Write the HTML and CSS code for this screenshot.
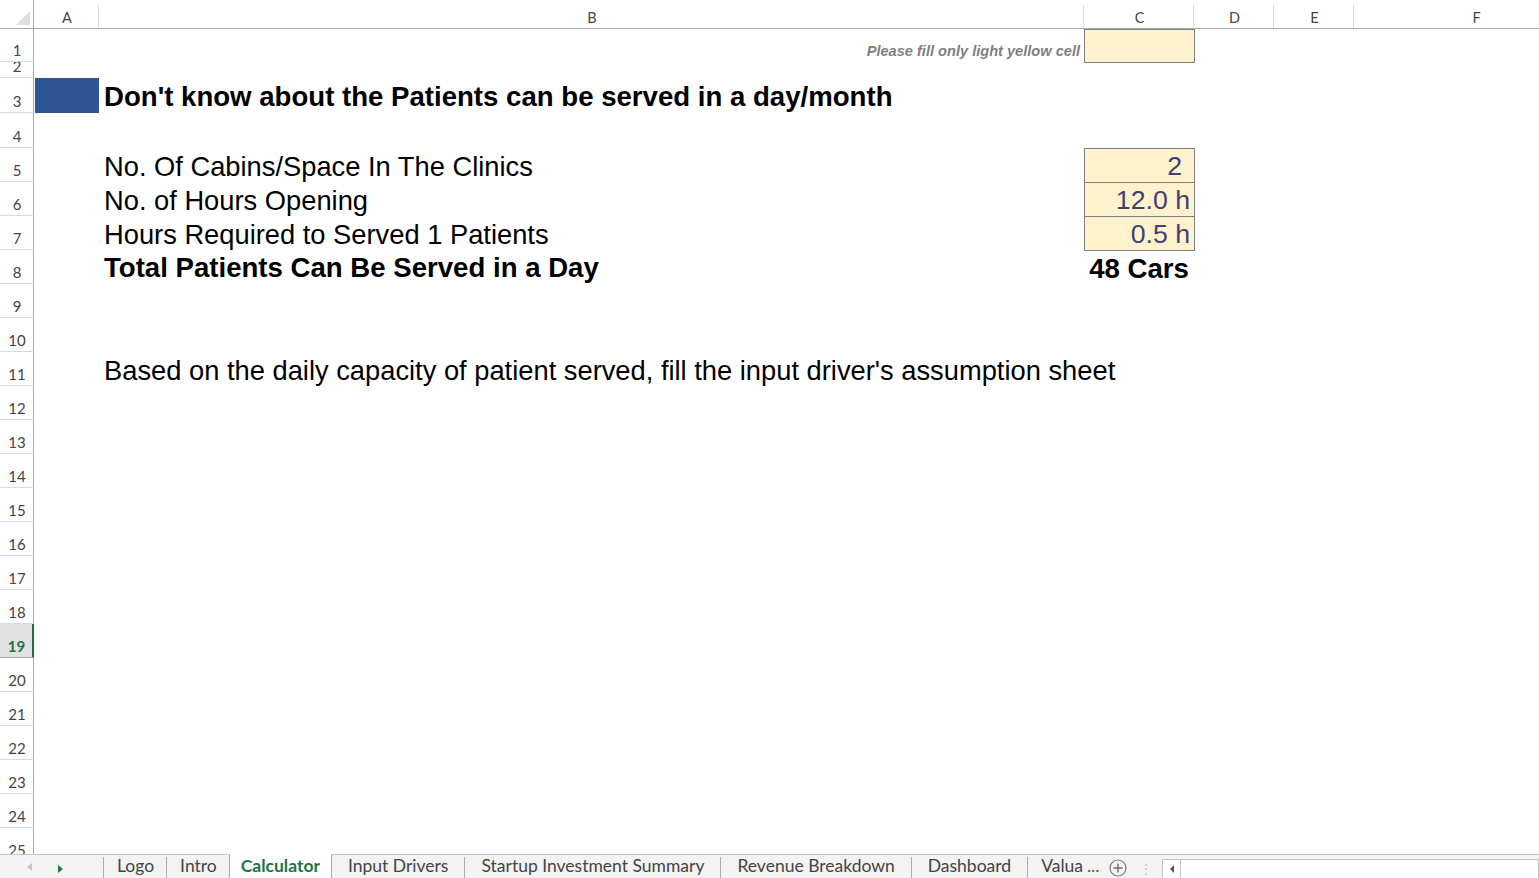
FILE: index.html
```html
<!DOCTYPE html>
<html lang="en">
<head>
  <meta charset="UTF-8" />
  <title>Calculator</title>
  <link rel="stylesheet" href="styles.css">
</head>
<body>

<!-- Sheet grid -->
<div class="sheet">
  <!-- column headers -->
  <div class="corner"><span class="corner-tri"></span></div>
  <div class="col-head">A</div>
  <div class="col-head">B</div>
  <div class="col-head">C</div>
  <div class="col-head">D</div>
  <div class="col-head">E</div>
  <div class="col-head last">F</div>

  <!-- row headers -->
  <div class="row-head">1</div>
  <div class="row-head">2</div>
  <div class="row-head">3</div>
  <div class="row-head">4</div>
  <div class="row-head">5</div>
  <div class="row-head">6</div>
  <div class="row-head">7</div>
  <div class="row-head">8</div>
  <div class="row-head">9</div>
  <div class="row-head">10</div>
  <div class="row-head">11</div>
  <div class="row-head">12</div>
  <div class="row-head">13</div>
  <div class="row-head">14</div>
  <div class="row-head">15</div>
  <div class="row-head">16</div>
  <div class="row-head">17</div>
  <div class="row-head">18</div>
  <div class="row-head selected">19</div>
  <div class="row-head">20</div>
  <div class="row-head">21</div>
  <div class="row-head">22</div>
  <div class="row-head">23</div>
  <div class="row-head">24</div>
  <div class="row-head">25</div>

  <!-- cells -->
  <div class="cell note">Please fill only light yellow cell</div>
  <div class="cell input input-note"></div>

  <div class="cell marker"></div>
  <div class="cell title">Don't know about the Patients can be served in a day/month</div>

  <div class="cell label r5">No. Of Cabins/Space In The Clinics</div>
  <div class="cell input value count r5">2</div>
  <div class="cell label r6">No. of Hours Opening</div>
  <div class="cell input value r6">12.0 h</div>
  <div class="cell label r7">Hours Required to Served 1 Patients</div>
  <div class="cell input value r7">0.5 h</div>
  <div class="cell label total r8">Total Patients Can Be Served in a Day</div>
  <div class="cell value total r8">48 Cars</div>

  <div class="cell label r11">Based on the daily capacity of patient served, fill the input driver's assumption sheet</div>
</div>

<!-- Sheet tabs -->
<div class="tabbar">
  <div class="tab-nav">
    <span class="arrow-left"></span>
    <span class="arrow-right"></span>
  </div>
  <div class="tab short">Logo</div>
  <div class="tab short">Intro</div>
  <div class="tab active">Calculator</div>
  <div class="tab">Input Drivers</div>
  <div class="tab">Startup Investment Summary</div>
  <div class="tab">Revenue Breakdown</div>
  <div class="tab">Dashboard</div>
  <div class="tab more">Valua <span class="dots">...</span></div>
  <div class="add-sheet">
    <svg width="18" height="18" viewBox="0 0 18 18">
      <circle cx="9" cy="9" r="8" fill="none" stroke="#7a7a7a" stroke-width="1.2"/>
      <path d="M9 4.5v9M4.5 9h9" stroke="#6a6a6a" stroke-width="1.4"/>
    </svg>
  </div>
  <div class="splitter">&#8942;</div>
  <div class="hscroll">
    <div class="hscroll-btn"><span class="arrow-small"></span></div>
  </div>
</div>

</body>
</html>
```

FILE: styles.css
```css
body {
  margin: 0;
  background: #fff;
  font-family: "Liberation Sans", Arial, sans-serif;
  color: #000;
  overflow: hidden;
}

/* Sheet */
.sheet {
  display: grid;
  grid-template-columns: 34px 65px 985px 110px 80px 80px 244px;
  grid-template-rows: 29px 33px 16px 35px 35px repeat(21, 34px);
  height: 854px;
  overflow: hidden;
}

.corner {
  grid-row: 1;
  grid-column: 1;
  border-right: 1px solid #ababab;
  border-bottom: 1px solid #ababab;
  position: relative;
}

.corner-tri {
  position: absolute;
  right: 3px;
  bottom: 3px;
  width: 0;
  height: 0;
  border-left: 14px solid transparent;
  border-bottom: 14px solid #dfdfdf;
}

.col-head {
  grid-row: 1;
  font-family: "Lato", "Open Sans", sans-serif;
  font-size: 14.5px;
  color: #444;
  display: flex;
  align-items: center;
  justify-content: center;
  padding: 7px 0 0 1px;
  border-bottom: 1px solid #ababab;
  box-sizing: border-box;
  position: relative;
}

.col-head::after {
  content: '';
  position: absolute;
  right: 0;
  top: 5px;
  bottom: 0;
  width: 1px;
  background: #dadada;
}

.col-head.last::after {
  display: none;
}

.row-head {
  grid-column: 1;
  font-family: "Lato", "Open Sans", sans-serif;
  font-size: 15px;
  color: #444;
  display: flex;
  align-items: flex-end;
  justify-content: center;
  padding: 0 0 2px 1px;
  box-sizing: border-box;
  border-right: 1px solid #ababab;
  border-bottom: 1px solid #dadada;
  overflow: hidden;
}

.row-head.selected {
  background: #e1e1e1;
  color: #217346;
  font-weight: bold;
  border-right: 2px solid #217346;
  border-bottom-color: #ababab;
}

/* Cells */
.cell {
  white-space: nowrap;
  display: flex;
  align-items: flex-end;
  box-sizing: border-box;
}

.note {
  grid-row: 2;
  grid-column: 3;
  justify-content: flex-end;
  font-size: 14.6px;
  font-weight: bold;
  font-style: italic;
  color: #7f7f7f;
  padding: 0 4px 3px 0;
}

.input {
  background: #fff2cc;
  border: 1px solid #7f7f7f;
  margin: 0 -1px -1px 0;
}

.input-note {
  grid-row: 2;
  grid-column: 4;
}

.marker {
  grid-row: 4;
  grid-column: 2;
  background: #2f5597;
  margin-left: 1px;
}

.title {
  grid-row: 4;
  grid-column: 3;
  font-size: 27.6px;
  font-weight: bold;
  line-height: 1;
  padding: 0 0 2px 5px;
}

.label {
  grid-column: 3;
  font-size: 27.3px;
  padding: 0 0 2px 5px;
  line-height: 1;
}

.label.total {
  font-size: 27.6px;
  font-weight: bold;
}

.value {
  grid-column: 4;
  font-size: 26.7px;
  color: #3f3f76;
  justify-content: flex-end;
  padding: 0 4px 2px 0;
  line-height: 1;
}

.value.count {
  padding-right: 12px;
}

.value.total {
  color: #000;
  font-weight: bold;
  font-size: 27.6px;
  justify-content: center;
  padding-right: 0;
  padding-bottom: 1px;
}

.r5 { grid-row: 6; }
.r6 { grid-row: 7; }
.r7 { grid-row: 8; }
.r8 { grid-row: 9; }
.r11 { grid-row: 12; }

/* Tab bar */
.tabbar {
  display: flex;
  align-items: stretch;
  height: 24px;
  border-top: 1px solid #c6c6c6;
  background: #f3f3f3;
  font-family: "Lato", "Open Sans", sans-serif;
  font-size: 17.5px;
  color: #444;
  box-sizing: border-box;
}

.tab-nav {
  width: 103px;
  display: flex;
  align-items: center;
  padding-left: 27px;
  gap: 26px;
  box-sizing: border-box;
}

.arrow-left {
  width: 0;
  height: 0;
  border-top: 4px solid transparent;
  border-bottom: 4px solid transparent;
  border-right: 5px solid #c4c4c4;
}

.arrow-right {
  width: 0;
  height: 0;
  border-top: 4px solid transparent;
  border-bottom: 4px solid transparent;
  border-left: 5px solid #217346;
  margin-top: 4px;
}

.tab {
  display: flex;
  align-items: center;
  padding: 0 16px 4px;
  border-left: 1px solid #ababab;
  margin-top: 2px;
  line-height: 1;
}

.tab.short {
  padding-left: 13px;
  padding-right: 12px;
}

.tab.active {
  background: #fff;
  color: #217346;
  font-weight: bold;
  margin-top: -1px;
  padding: 0 11px 1px;
  border-right: 1px solid #ababab;
}

.tab.active + .tab {
  border-left: none;
}

.tab.more {
  padding-left: 13px;
  padding-right: 10px;
}

.dots {
  color: #217346;
  margin-left: 4px;
}

.add-sheet {
  display: flex;
  align-items: center;
  padding-top: 3px;
}

.splitter {
  color: #c8c8c8;
  font-size: 14px;
  display: flex;
  align-items: center;
  padding: 3px 9px 0 12px;
}

.hscroll {
  flex: 1;
  margin-top: 4px;
  background: #fff;
  border: 1px solid #c6c6c6;
  border-bottom: none;
  display: flex;
}

.hscroll-btn {
  width: 17px;
  border-right: 1px solid #c6c6c6;
  display: flex;
  align-items: center;
  justify-content: center;
}

.arrow-small {
  width: 0;
  height: 0;
  border-top: 4px solid transparent;
  border-bottom: 4px solid transparent;
  border-right: 4px solid #555;
}
```
